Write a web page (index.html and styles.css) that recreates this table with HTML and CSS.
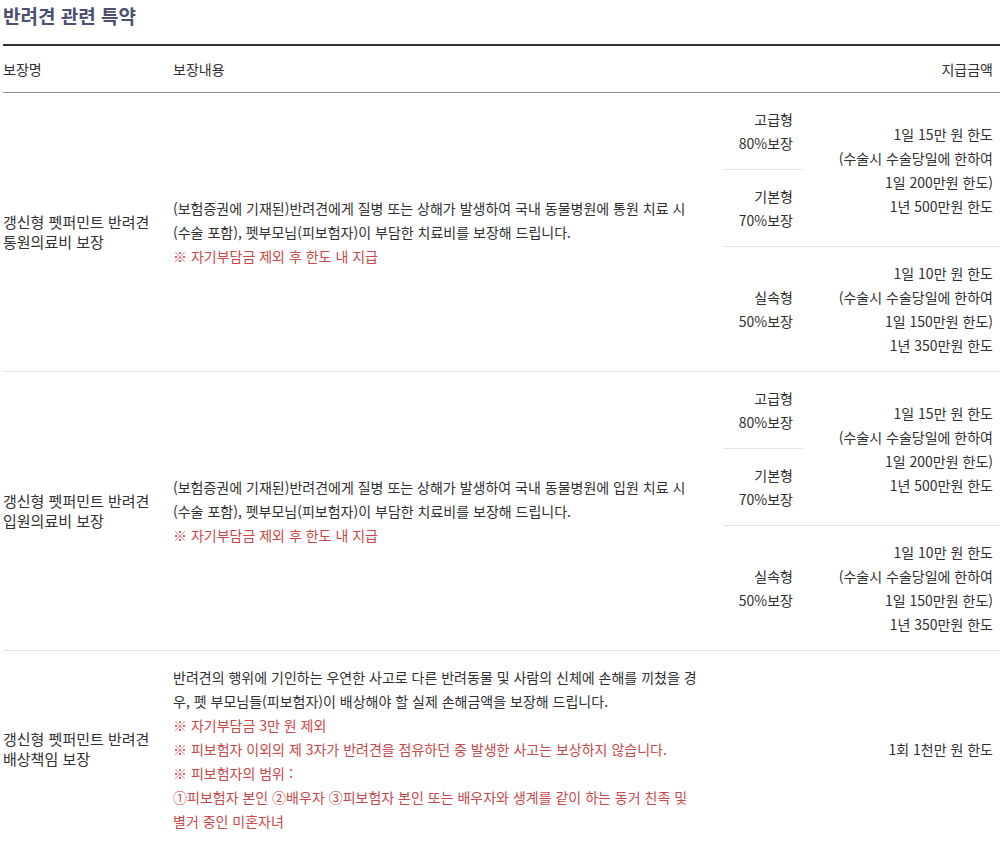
FILE: index.html
```html
<!DOCTYPE html>
<html lang="ko">
<head>
<meta charset="utf-8">
<title>반려견 관련 특약</title>
<link rel="stylesheet" href="styles.css">
</head>
<body>
<div class="page">
  <h2 class="title">반려견 관련 특약</h2>
  <table class="rider">
    <colgroup>
      <col class="c-name"><col class="c-desc"><col class="c-type"><col class="c-amt">
    </colgroup>
    <thead>
      <tr>
        <th class="h-name">보장명</th>
        <th class="h-desc">보장내용</th>
        <th class="h-amt" colspan="2">지급금액</th>
      </tr>
    </thead>
    <tbody class="grp">
      <tr>
        <td class="name" rowspan="3">갱신형 펫퍼민트 반려견<br>통원의료비 보장</td>
        <td class="desc" rowspan="3">(보험증권에 기재된)반려견에게 질병 또는 상해가 발생하여 국내 동물병원에 통원 치료 시<br>(수술 포함), 펫부모님(피보험자)이 부담한 치료비를 보장해 드립니다.<br><span class="note">※ 자기부담금 제외 후 한도 내 지급</span></td>
        <td class="type sep">고급형<br>80%보장</td>
        <td class="amt sep" rowspan="2">1일 15만 원 한도<br>(수술시 수술당일에 한하여<br>1일 200만원 한도)<br>1년 500만원 한도</td>
      </tr>
      <tr>
        <td class="type sep">기본형<br>70%보장</td>
      </tr>
      <tr>
        <td class="type">실속형<br>50%보장</td>
        <td class="amt">1일 10만 원 한도<br>(수술시 수술당일에 한하여<br>1일 150만원 한도)<br>1년 350만원 한도</td>
      </tr>
    </tbody>
    <tbody class="grp">
      <tr>
        <td class="name" rowspan="3">갱신형 펫퍼민트 반려견<br>입원의료비 보장</td>
        <td class="desc" rowspan="3">(보험증권에 기재된)반려견에게 질병 또는 상해가 발생하여 국내 동물병원에 입원 치료 시<br>(수술 포함), 펫부모님(피보험자)이 부담한 치료비를 보장해 드립니다.<br><span class="note">※ 자기부담금 제외 후 한도 내 지급</span></td>
        <td class="type sep">고급형<br>80%보장</td>
        <td class="amt sep" rowspan="2">1일 15만 원 한도<br>(수술시 수술당일에 한하여<br>1일 200만원 한도)<br>1년 500만원 한도</td>
      </tr>
      <tr>
        <td class="type sep">기본형<br>70%보장</td>
      </tr>
      <tr>
        <td class="type">실속형<br>50%보장</td>
        <td class="amt">1일 10만 원 한도<br>(수술시 수술당일에 한하여<br>1일 150만원 한도)<br>1년 350만원 한도</td>
      </tr>
    </tbody>
    <tbody class="grp">
      <tr>
        <td class="name">갱신형 펫퍼민트 반려견<br>배상책임 보장</td>
        <td class="desc">반려견의 행위에 기인하는 우연한 사고로 다른 반려동물 및 사람의 신체에 손해를 끼쳤을 경<br>우, 펫 부모님들(피보험자)이 배상해야 할 실제 손해금액을 보장해 드립니다.<br><span class="note">※ 자기부담금 3만 원 제외<br>※ 피보험자 이외의 제 3자가 반려견을 점유하던 중 발생한 사고는 보상하지 않습니다.<br>※ 피보험자의 범위 :<br>①피보험자 본인 ②배우자 ③피보험자 본인 또는 배우자와 생계를 같이 하는 동거 친족 및<br>별거 중인 미혼자녀</span></td>
        <td class="amt" colspan="2">1회 1천만 원 한도</td>
      </tr>
    </tbody>
  </table>
</div>
</body>
</html>
```

FILE: styles.css
```css
html, body {
  margin: 0;
  padding: 0;
  background: #fff;
}

body {
  font-family: "Noto Sans CJK KR", "Noto Sans", sans-serif;
  color: #303030;
  font-size: 14px;
}

.page {
  padding-left: 3px;
}

.title {
  margin: 0 0 12px;
  font-size: 19px;
  line-height: 32px;
  font-weight: 700;
  color: #4d5070;
}

.rider {
  width: 997px;
  table-layout: fixed;
  border-collapse: collapse;
  border-top: 2px solid #333;
}

.c-name { width: 170px; }
.c-desc { width: 550px; }
.c-type { width: 80px; }
.c-amt { width: 197px; }

.rider th {
  height: 46px;
  padding: 0;
  font-weight: 400;
  font-size: 14px;
  line-height: 24px;
  text-align: left;
  vertical-align: middle;
  border-bottom: 1px solid #919191;
}

.rider th.h-amt {
  text-align: right;
  padding-right: 7px;
}

.rider td {
  padding: 14px 0;
  line-height: 24px;
  vertical-align: middle;
  white-space: nowrap;
}

.grp {
  border-bottom: 1px solid #e4e4e4;
}

.rider td.name {
  font-size: 15px;
  line-height: 20px;
  padding-right: 10px;
}

.rider td.desc {
  padding-right: 17px;
}

.rider td.type {
  text-align: right;
  padding-right: 10px;
}

.rider td.amt {
  text-align: right;
  padding-right: 7px;
}

.rider td.sep {
  border-bottom: 1px solid #e4e4e4;
}

.note {
  color: #c9484a;
}
```
